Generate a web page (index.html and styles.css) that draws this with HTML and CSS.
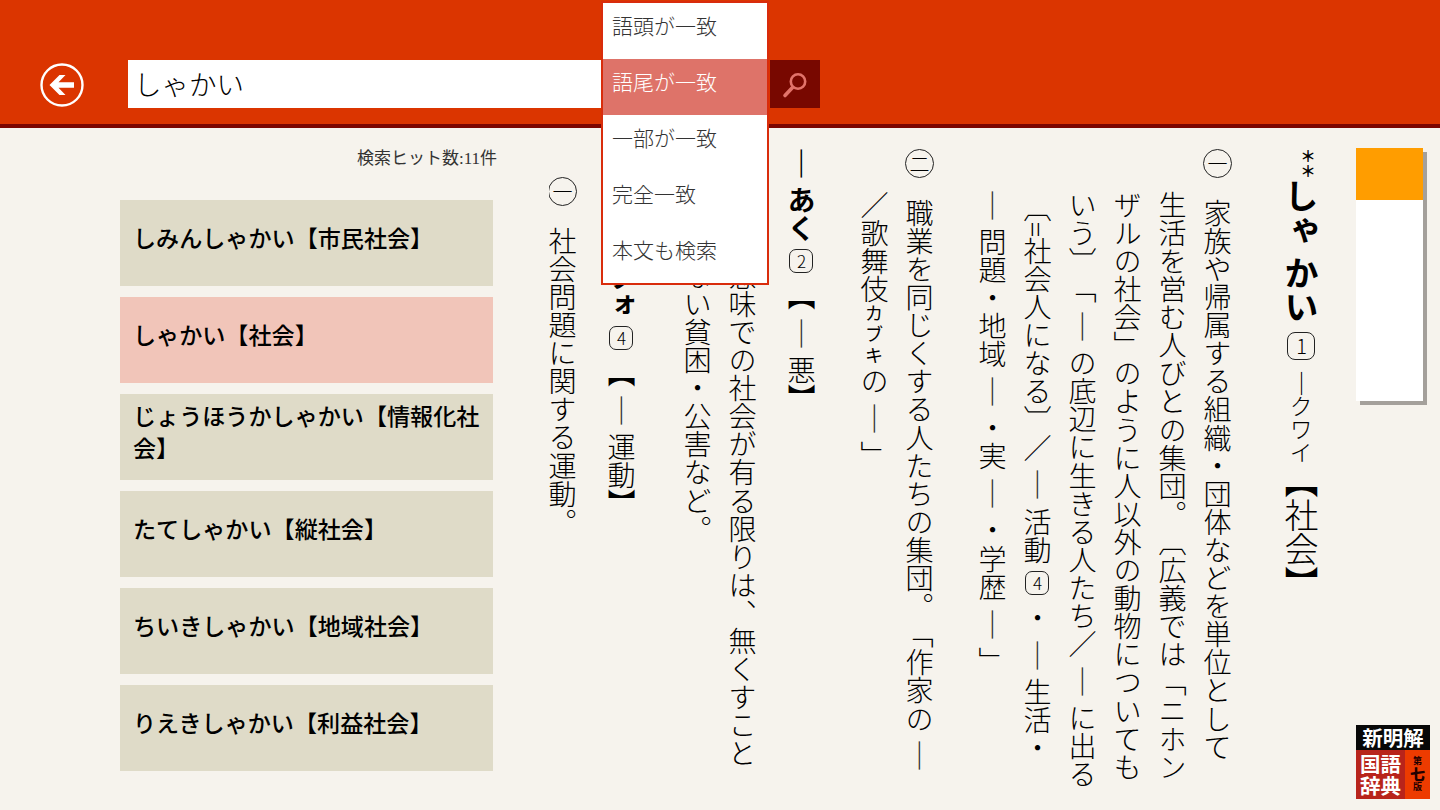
FILE: index.html
```html
<!DOCTYPE html>
<html lang="ja">
<head>
  <meta charset="UTF-8">
  <meta name="viewport" content="width=device-width, initial-scale=1.0">
  <title>新明解国語辞典 第七版</title>
  <link rel="stylesheet" href="styles.css">
</head>
<body>
  <header class="topbar">
    <button class="back" aria-label="戻る">
      <svg width="46" height="46" viewBox="0 0 46 46">
        <circle cx="23" cy="23" r="20.5" fill="none" stroke="#fff" stroke-width="2.4"/>
        <path d="M10.5 23 L20.5 13 H26.5 L19.5 20.2 H35 V25.8 H19.5 L26.5 33 H20.5 Z" fill="#fff"/>
      </svg>
    </button>
    <div class="search">
      <div class="search-text">しゃかい</div>
      <div class="mode">
        <ul class="mode-menu">
          <li>語頭が一致</li>
          <li class="selected">語尾が一致</li>
          <li>一部が一致</li>
          <li>完全一致</li>
          <li>本文も検索</li>
        </ul>
      </div>
      <button class="search-button" aria-label="検索">
        <svg width="50" height="48" viewBox="0 0 50 48">
          <circle cx="28" cy="21.5" r="7.2" fill="none" stroke="#e2736a" stroke-width="2.6"/>
          <path d="M22.5 27.5 L15 35.5" stroke="#e2736a" stroke-width="3.6" stroke-linecap="round"/>
        </svg>
      </button>
    </div>
  </header>

  <main class="main">
    <section class="results">
      <p class="hits">検索ヒット数:11件</p>
      <ul class="result-list">
        <li>しみんしゃかい【市民社会】</li>
        <li class="current">しゃかい【社会】</li>
        <li>じょうほうかしゃかい【情報化社会】</li>
        <li>たてしゃかい【縦社会】</li>
        <li>ちいきしゃかい【地域社会】</li>
        <li>りえきしゃかい【利益社会】</li>
      </ul>
    </section>

    <article class="entry">
      <h1 class="headword"><span class="stars">＊＊</span><b>しゃ</b><b class="kai">かい</b><span class="accent">1</span><span class="old-kana"><i>―</i>クワイ</span>【社会】</h1>

      <p class="line sense"><span class="num">一</span>家族や帰属する組織・団体などを単位として</p>
      <p class="line">生活を営む人びとの集団。〔広義では「ニホン</p>
      <p class="line">ザルの社会」のように人以外の動物についても</p>
      <p class="line">いう〕「<i>―</i>の底辺に生きる人たち／<i>―</i>に出る</p>
      <p class="line paren">〔=社会人になる〕／<i>―</i>活動<span class="accent">4</span>・<i>―</i>生活・</p>
      <p class="line dash-first"><i>―</i>問題・地域<i>―</i>・実<i>―</i>・学歴<i>―</i>」</p>

      <p class="line sense second"><span class="num">二</span>職業を同じくする人たちの集団。「作家の<i>―</i></p>
      <p class="line">／歌舞伎<small>カブキ</small>の<i>―</i>」</p>

      <h2 class="line sub aku"><i class="bold">―</i><b>あく</b><span class="accent">2</span>【<i>―</i>悪】</h2>
      <p class="line after-sub covered">意味での社会が有る限りは、無くすこと</p>
      <p class="line covered">ない貧困・公害など。</p>

      <h2 class="line sub undo"><b>フォ</b><span class="accent">4</span>【<i>―</i>運動】</h2>
      <p class="line after-sub sense inner"><span class="num">一</span>社会問題に関する運動。</p>
    </article>

    <aside class="side">
      <div class="scroller"><div class="thumb"></div></div>
      <div class="logo">
        <div class="logo-top">新明解</div>
        <div class="logo-bottom">
          <div class="logo-name">国語<br>辞典</div>
          <div class="logo-edition"><span>第</span><b>七</b><span>版</span></div>
        </div>
      </div>
    </aside>
  </main>
</body>
</html>
```
FILE: styles.css
```css
* {
  box-sizing: border-box;
}

body {
  margin: 0;
  width: 1440px;
  height: 810px;
  overflow: hidden;
  background: #f6f3ed;
  color: #000;
  font-family: "Noto Sans CJK JP", sans-serif;
  font-weight: 300;
  text-spacing-trim: space-all;
}

ul,
p,
h1,
h2 {
  margin: 0;
  padding: 0;
  list-style: none;
  font-weight: 300;
}

button {
  border: none;
  padding: 0;
  background: none;
}

svg {
  display: block;
}

/* header */
.topbar {
  display: flex;
  height: 128px;
  padding: 60px 0 0 39px;
  background: #db3500;
  border-bottom: 4px solid #7c0500;
}

.back {
  width: 46px;
  height: 46px;
  margin: 2px 43px 0 0;
}

.search {
  display: flex;
  height: 48px;
}

.search-text {
  width: 473px;
  padding-left: 6px;
  background: #fff;
  font-size: 27.5px;
  line-height: 46px;
}

.mode {
  position: relative;
  width: 169px;
}

.mode-menu {
  position: absolute;
  z-index: 2;
  left: 0;
  top: -59px;
  width: 168px;
  border: 2px solid #d92c0c;
  background: #fff;
}

.mode-menu li {
  height: 56px;
  padding-left: 9px;
  font-size: 21px;
  line-height: 45px;
  color: #333;
}

.mode-menu .selected {
  background: #de7369;
  color: #fff;
}

.search-button {
  width: 50px;
  background: #780800;
}

/* body */
.main {
  display: flex;
  height: 682px;
  padding-left: 120px;
}

.results {
  width: 377px;
  margin-right: 52px;
}

.hits {
  height: 72px;
  padding-top: 19px;
  font-family: "Liberation Serif", "Noto Sans CJK JP", serif;
  font-size: 17px;
  font-weight: 400;
  line-height: 24px;
  text-align: right;
  color: #333;
}

.result-list {
  display: flex;
  flex-direction: column;
  gap: 11px;
  width: 373px;
}

.result-list li {
  display: flex;
  align-items: center;
  height: 86px;
  padding: 0 12px 12px 13px;
  background: #dfdbc8;
  font-size: 23.1px;
  font-weight: 500;
  line-height: 32px;
}

.result-list .current {
  background: #f1c5b9;
}

/* dictionary entry, set vertically */
.entry {
  width: 775px;
  height: 682px;
  overflow: hidden;
  writing-mode: vertical-rl;
  white-space: nowrap;
}

.headword {
  width: 45px;
  margin-left: 39px;
  padding-top: 20px;
  font-size: 34px;
  line-height: 45px;
}

.headword b {
  display: inline-block;
  font-weight: 700;
}

.stars {
  display: inline-block;
  height: 31px;
  font-size: 15.5px;
  font-weight: 700;
  line-height: 20px;
  vertical-align: 7px;
}

.kai {
  margin-top: 9px;
}

.old-kana {
  font-size: 23px;
}

.old-kana i {
  margin: -2px 0;
  font-size: 27px;
  font-style: normal;
  line-height: 0;
  vertical-align: 1px;
}

.line {
  width: 45px;
  padding-top: 63px;
  font-size: 28.1px;
  line-height: 45px;
}

/* the long dash standing for the headword */
.line i {
  margin: 6.5px 0;
  font-size: 33px;
  font-style: normal;
  line-height: 0;
  vertical-align: 1.5px;
  color: #333;
}

.line .bold {
  color: #000;
  font-weight: 500;
}

.line small {
  font-size: 18.5px;
  font-weight: 400;
  letter-spacing: 2.8px;
}

.num {
  display: inline-flex;
  align-items: center;
  justify-content: center;
  width: 29px;
  height: 29px;
  margin-bottom: 21px;
  border: 1.5px solid #222;
  border-radius: 50%;
  font-size: 20px;
  line-height: 27px;
}

.accent {
  display: inline-flex;
  align-items: center;
  justify-content: center;
  width: 24px;
  height: 24px;
  margin: 7px 0 9px;
  border: 1.4px solid #222;
  border-radius: 7px;
  font-size: 17px;
  line-height: 22px;
  text-orientation: upright;
}

.headword .accent {
  width: 28px;
  height: 28px;
  margin: 8px 0 12px;
  border-radius: 8px;
  font-size: 20px;
}

.sense {
  padding-top: 21px;
}

.paren {
  padding-top: 66px;
}

.dash-first {
  padding-top: 54px;
}

.second,
.aku {
  margin-right: 28px;
}

.sub b {
  font-weight: 700;
}

.aku {
  padding-top: 12px;
}

.after-sub {
  margin-right: 14px;
}

.covered {
  padding-top: 134px;
}

.undo {
  margin-right: 31px;
  padding-top: 135px;
}

.inner {
  padding-top: 49px;
}

/* right column */
.side {
  display: flex;
  flex-direction: column;
  justify-content: space-between;
  padding: 20px 10px 11px 32px;
}

.scroller {
  width: 67px;
  height: 253px;
  background: #fff;
  box-shadow: 4px 4px 0 #a4a09b;
}

.thumb {
  height: 52px;
  background: #ff9d00;
}

.logo {
  width: 74px;
  height: 74px;
  font-weight: 700;
  color: #fff;
}

.logo-top {
  height: 25px;
  background: #080808;
  font-size: 20.5px;
  line-height: 25px;
  text-align: center;
}

.logo-bottom {
  display: flex;
  height: 49px;
}

.logo-name {
  width: 49px;
  padding-top: 2px;
  background: #b8241b;
  font-size: 20.5px;
  line-height: 22px;
  text-align: center;
}

.logo-edition {
  display: flex;
  flex-direction: column;
  align-items: center;
  width: 25px;
  padding-top: 6px;
  background: #ed3b00;
  color: #200;
  font-size: 9px;
  line-height: 10px;
}

.logo-edition b {
  font-size: 15px;
  line-height: 16px;
}
```
